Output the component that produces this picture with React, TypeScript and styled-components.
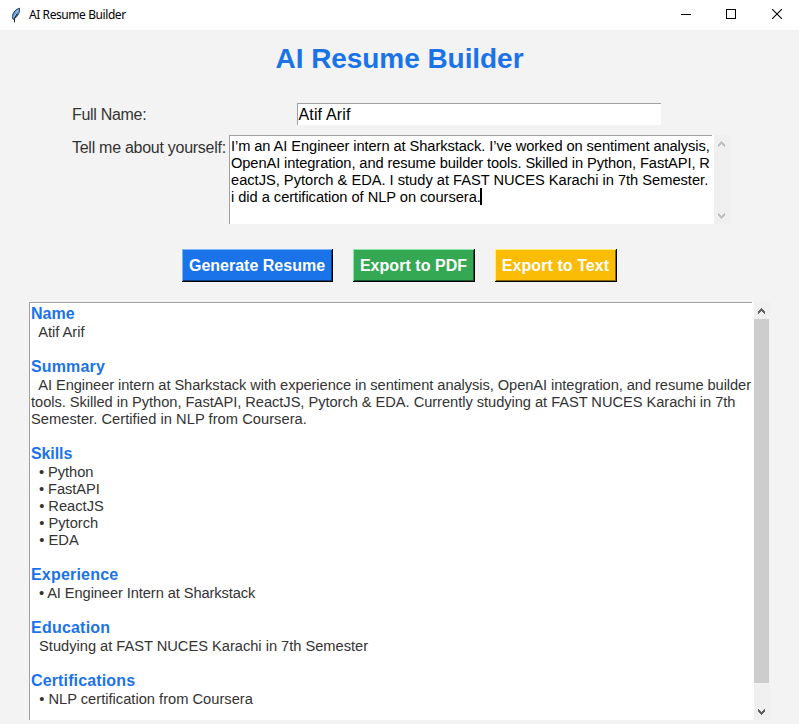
import React from "react";
import styled, { createGlobalStyle } from "styled-components";

const GlobalStyle = createGlobalStyle`
  * { box-sizing: border-box; }
  html, body { margin: 0; padding: 0; overflow: hidden; background: #f3f3f3; }
  body { font-family: "Liberation Sans", Arial, sans-serif; color: #333; }
`;

const Window = styled.div`
  width: 799px;
  height: 724px;
  display: flex;
  flex-direction: column;
  background: #f3f3f3;
  overflow: hidden;
`;

const TitleBar = styled.header`
  height: 30px;
  flex: none;
  display: flex;
  align-items: center;
  justify-content: space-between;
  background: #fff;
`;

const Caption = styled.div`
  display: flex;
  align-items: center;
  gap: 7px;
  padding-left: 10px;
  font: 12px/16px "Noto Sans", "Open Sans", sans-serif;
  letter-spacing: -0.42px;
  color: #000;
  white-space: pre;
`;

const CaptionButtons = styled.div`
  display: flex;
`;

const CaptionButton = styled.span`
  width: 46px;
  height: 30px;
  display: flex;
  padding: 9px 0 0 19px;

  &:first-child { width: 45px; }
`;

const Heading = styled.h1`
  margin: 11px 0 0;
  height: 34px;
  text-align: center;
  font-size: 28px;
  line-height: 36px;
  font-weight: bold;
  letter-spacing: -0.06px;
  color: #1a73e8;
  white-space: pre;
`;

const Form = styled.form`
  margin: 28px 0 0 72px;
  display: grid;
  grid-template-columns: 157px 501px;
  row-gap: 10px;
`;

const Label = styled.label<{ $top: number; $track?: number }>`
  padding-top: ${(p) => p.$top}px;
  font-size: 16px;
  line-height: 18px;
  letter-spacing: ${(p) => p.$track ?? 0}px;
  white-space: pre;
`;

const Entry = styled.div`
  justify-self: center;
  margin-right: 2px;
  width: 364px;
  height: 22px;
  padding: 2px 0 0 1px;
  border: solid #a0a0a0;
  border-width: 1px 0 0 1px;
  background: #fff;
  color: #000;
  font-size: 16px;
  line-height: 18px;
  letter-spacing: 0.15px;
`;

const ScrollArea = styled.div`
  display: flex;
  gap: 2px;
  align-self: flex-start;
  background: #fff;
`;

const TextPane = styled.div<{ $w: number; $h: number; $ink: string }>`
  width: ${(p) => p.$w}px;
  height: ${(p) => p.$h}px;
  flex: none;
  padding: 1px 0 0 1px;
  border: solid #a0a0a0;
  border-width: 1px 0 0 1px;
  background: #fff;
  color: ${(p) => p.$ink};
`;

const Line = styled.div<{ $track?: number }>`
  height: 17px;
  font-size: 14.67px;
  line-height: 19px;
  letter-spacing: ${(p) => p.$track ?? 0}px;
  white-space: pre;
`;

const Caret = styled.span`
  display: inline-block;
  width: 2px;
  height: 17px;
  margin-left: -1px;
  vertical-align: top;
  background: #000;
`;

const Track = styled.div<{ $w: number }>`
  width: ${(p) => p.$w}px;
  display: flex;
  flex-direction: column;
  justify-content: space-between;
  background: #f0f0f0;
`;

const Arrow = styled.span`
  height: 17px;
  flex: none;
  display: flex;
  padding: 6px 0 0 4px;
`;

const Thumb = styled.div`
  width: 15px;
  height: 364px;
  margin-bottom: auto;
  background: #cdcdcd;
`;

const Actions = styled.div`
  display: flex;
  gap: 20px;
  margin: 25px 0 0 182px;
`;

const ActionButton = styled.button<{ $w: number; $fill: string; $light: string; $dark: string; $track: number }>`
  width: ${(p) => p.$w}px;
  height: 33px;
  padding: 1px 0 0;
  border: solid #000;
  border-width: 0 1px 1px 0;
  background: ${(p) => p.$fill};
  box-shadow: inset 1px 1px ${(p) => p.$light}, inset -1px -1px ${(p) => p.$dark};
  border-radius: 0;
  color: #fff;
  font: bold 16px/18px "Liberation Sans", Arial, sans-serif;
  letter-spacing: ${(p) => p.$track}px;
  white-space: nowrap;
`;

const Output = styled(ScrollArea)`
  margin: 20px 0 0 29px;
`;

const SectionTitle = styled.h2<{ $track?: number }>`
  margin: 0;
  height: 19px;
  font-size: 16px;
  line-height: 19px;
  letter-spacing: ${(p) => p.$track ?? 0}px;
  color: #1a73e8;
`;

const Section = styled.section`
  margin-bottom: 17px;
`;

type TextLine = [text: string, track?: number];

const bio: TextLine[] = [
  ["I’m an AI Engineer intern at Sharkstack. I’ve worked on sentiment analysis,", -0.08],
  ["OpenAI integration, and resume builder tools. Skilled in Python, FastAPI, R", -0.1],
  ["eactJS, Pytorch & EDA. I study at FAST NUCES Karachi in 7th Semester.", -0.01],
  ["i did a certification of NLP on coursera.", -0.04],
];

const resume: { title: string; track?: number; lines: TextLine[] }[] = [
  { title: "Name", lines: [["  Atif Arif", -0.03]] },
  {
    title: "Summary",
    track: 0.15,
    lines: [
      ["  AI Engineer intern at Sharkstack with experience in sentiment analysis, OpenAI integration, and resume builder", -0.067],
      ["tools. Skilled in Python, FastAPI, ReactJS, Pytorch & EDA. Currently studying at FAST NUCES Karachi in 7th", -0.045],
      ["Semester. Certified in NLP from Coursera.", 0.04],
    ],
  },
  {
    title: "Skills",
    track: -0.1,
    lines: [["  • Python", -0.06], ["  • FastAPI", -0.07], ["  • ReactJS", 0], ["  • Pytorch", 0.02], ["  • EDA", 0.03]],
  },
  { title: "Experience", track: 0.2, lines: [["  • AI Engineer Intern at Sharkstack", -0.09]] },
  { title: "Education", track: 0.22, lines: [["  Studying at FAST NUCES Karachi in 7th Semester", -0.015]] },
  { title: "Certifications", track: 0.14, lines: [["  • NLP certification from Coursera", 0.01]] },
];

const Chevron = ({ down, color }: { down?: boolean; color: string }) => (
  <svg width="7" height="6" viewBox="0 0 7 6" shapeRendering="crispEdges">
    <path
      fill={color}
      transform={down ? "matrix(1 0 0 -1 0 6)" : undefined}
      d="M3 0h1v1h1v1h1v1h1v3h-1v-1h-1v-1h-1v-1h-1v1h-1v1h-1v1h-1v-3h1v-1h1v-1h1z"
    />
  </svg>
);

const Feather = () => (
  <svg width="12" height="17" viewBox="0 0 12 17">
    <path d="M9.500 1.200C6.300 1.800 3.200 5 2.500 8.500c-.3 1.700-.1 3 .7 4C6.300 11 10.500 6 9.500 1.200Z" fill="#5598dc" stroke="#182536" strokeWidth=".8" />
    <path d="M8.200 3 4.200 10" stroke="#8fc2f2" strokeWidth="1.500" />
    <path d="M7.200 6.500 4.500 11.500V15.500" fill="none" stroke="#111" strokeWidth=".9" />
  </svg>
);

export default function App() {
  return (
    <>
      <GlobalStyle />
      <Window>
        <TitleBar>
          <Caption>
            <Feather />
            AI Resume Builder
          </Caption>
          <CaptionButtons>
            <CaptionButton>
              <svg width="10" height="10" shapeRendering="crispEdges"><path d="M0 5.500h10" stroke="#000" /></svg>
            </CaptionButton>
            <CaptionButton>
              <svg width="10" height="10" shapeRendering="crispEdges"><path d="M.5.5h9v9h-9z" fill="none" stroke="#000" /></svg>
            </CaptionButton>
            <CaptionButton>
              <svg width="10" height="10"><path d="M0 0 10 10M10 0 0 10" stroke="#000" strokeWidth="1.100" /></svg>
            </CaptionButton>
          </CaptionButtons>
        </TitleBar>

        <Heading>AI Resume Builder</Heading>

        <Form>
          <Label $top={3} $track={-0.3}>Full Name:</Label>
          <Entry>Atif Arif</Entry>
          <Label $top={4} $track={-0.27}>Tell me about yourself:</Label>
          <ScrollArea>
            <TextPane $w={483} $h={89} $ink="#000">
              {bio.map(([text, track], i) => (
                <Line key={i} $track={track}>
                  {text}
                  {i === bio.length - 1 && <Caret />}
                </Line>
              ))}
            </TextPane>
            <Track $w={16}>
              <Arrow><Chevron color="#bfbfbf" /></Arrow>
              <Arrow><Chevron down color="#bfbfbf" /></Arrow>
            </Track>
          </ScrollArea>
        </Form>

        <Actions>
          <ActionButton $w={151} $fill="#1a73e8" $light="#7fb4fb" $dark="#0d3d7c" $track={0}>Generate Resume</ActionButton>
          <ActionButton $w={122} $fill="#34a853" $light="#8fe3a5" $dark="#1b592c" $track={0.04}>Export to PDF</ActionButton>
          <ActionButton $w={122} $fill="#fbbc05" $light="#ffee75" $dark="#866402" $track={0.07}>Export to Text</ActionButton>
        </Actions>

        <Output>
          <TextPane $w={723} $h={418} $ink="#333">
            {resume.map(({ title, track, lines }) => (
              <Section key={title}>
                <SectionTitle $track={track}>{title}</SectionTitle>
                {lines.map(([text, lineTrack]) => (
                  <Line key={text} $track={lineTrack}>{text}</Line>
                ))}
              </Section>
            ))}
          </TextPane>
          <Track $w={16}>
            <Arrow><Chevron color="#606060" /></Arrow>
            <Thumb />
            <Arrow><Chevron down color="#606060" /></Arrow>
          </Track>
        </Output>
      </Window>
    </>
  );
}
